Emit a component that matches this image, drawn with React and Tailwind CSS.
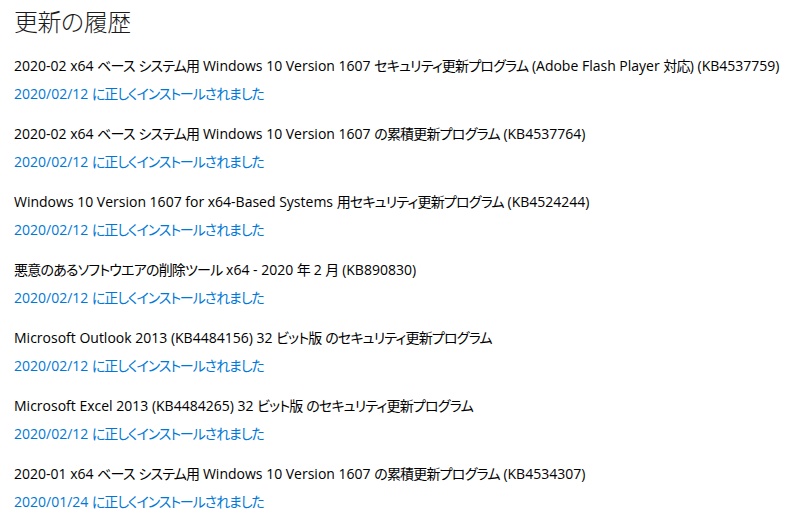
import React from "react";

const items = [
  ["2020-02 x64 ベース システム用 Windows 10 Version 1607 セキュリティ更新プログラム (Adobe Flash Player 対応) (KB4537759)", "2020/02/12"],
  ["2020-02 x64 ベース システム用 Windows 10 Version 1607 の累積更新プログラム (KB4537764)", "2020/02/12"],
  ["Windows 10 Version 1607 for x64-Based Systems 用セキュリティ更新プログラム (KB4524244)", "2020/02/12"],
  ["悪意のあるソフトウエアの削除ツール x64 - 2020 年 2 月 (KB890830)", "2020/02/12"],
  ["Microsoft Outlook 2013 (KB4484156) 32 ビット版 のセキュリティ更新プログラム", "2020/02/12"],
  ["Microsoft Excel 2013 (KB4484265) 32 ビット版 のセキュリティ更新プログラム", "2020/02/12"],
  ["2020-01 x64 ベース システム用 Windows 10 Version 1607 の累積更新プログラム (KB4534307)", "2020/01/24"],
];

const CJK = /([\u3000-\u30ff\u4e00-\u9fff]+)/;

function Mixed({ text, tight }) {
  const parts = text.split(CJK).filter(Boolean);
  return parts.map((p, i) =>
    CJK.test(p) ? (
      <span key={i} className={tight ? "tracking-[-1.1px]" : "tracking-[-0.8px]"}>{p}</span>
    ) : (
      <span key={i}>{p}</span>
    )
  );
}

export default function App() {
  return (
    <div className="w-[805px] h-[523px] bg-white overflow-hidden pl-[14px] text-black font-['Open_Sans','Noto_Sans_CJK_JP',sans-serif] [font-feature-settings:'palt']">
      <h1 className="pt-[6px] text-[24px] leading-[32px] font-light tracking-[-0.5px] text-[#1a1a1a]">更新の履歴</h1>
      <ul className="mt-[18px] flex flex-col">
        {items.map(([t, d], i) => (
          <li key={i} className="flex flex-col gap-[8px] pb-[20px]">
            <div className="text-[14px] leading-[20px] whitespace-nowrap">
              <Mixed text={t} />
            </div>
            <div className="text-[14px] leading-[20px] text-[#0078d7] whitespace-nowrap">
              <Mixed text={`${d} に正しくインストールされました`} tight />
            </div>
          </li>
        ))}
      </ul>
    </div>
  );
}
